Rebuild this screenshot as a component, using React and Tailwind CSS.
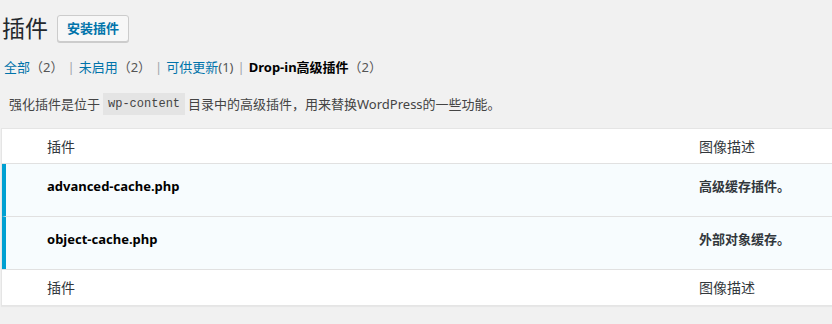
import React from "react";

const sans = { fontFamily: '"Segoe UI", "Noto Sans", "Noto Sans CJK SC", sans-serif' };

const tabs = [
  { label: "全部", count: "（2）", current: false },
  { label: "未启用", count: "（2）", current: false },
  { label: "可供更新", count: "(1)", current: false },
  { label: "Drop-in高级插件", count: "（2）", current: true },
];

const dropins = [
  { file: "advanced-cache.php", desc: "高级缓存插件。" },
  { file: "object-cache.php", desc: "外部对象缓存。" },
];

const HeadRow = ({ border, height }) => (
  <div
    className={`flex items-center text-[14px] text-[#32373c] ${height} ${border}`}
  >
    <div className="w-[688px] pl-[45px]">插件</div>
    <div className="pl-[9px]">图像描述</div>
  </div>
);

export default function App() {
  return (
    <div
      className="w-[832px] h-[324px] overflow-hidden bg-[#f1f1f1] text-[#444] text-[13px]"
      style={sans}
    >
      {/* page title */}
      <div className="flex items-center pt-[15px] pl-[2px]">
        <h1 className="text-[23px] leading-[27px] text-[#23282d] font-normal">插件</h1>
        <button className="ml-[9px] h-[27px] px-[9px] border border-[#ccc] rounded-[3px] bg-[#f7f7f7] text-[#0073aa] text-[13px] font-bold shadow-[0_1px_0_#ccc]">
          安装插件
        </button>
      </div>

      {/* filter links */}
      <ul className="flex items-center mt-[15px] pl-[4px] text-[13px] leading-[20px]">
        {tabs.map((t, i) => (
          <li key={t.label} className="flex items-center">
            {t.current ? (
              <span className="text-black font-bold">{t.label}</span>
            ) : (
              <span className="text-[#0073aa]">{t.label}</span>
            )}
            <span className="text-[#555]">{t.count}</span>
            {i < tabs.length - 1 && <span className="mx-[4px] text-[#a0a5aa]">|</span>}
          </li>
        ))}
      </ul>

      {/* description */}
      <p className="flex items-center mt-[16px] pl-[9px] leading-[20px]">
        强化插件是位于
        <code
          className="mx-[3px] px-[5px] py-[1px] bg-[#e4e4e4] text-[#444] text-[12px]"
          style={{ fontFamily: '"Liberation Mono", "DejaVu Sans Mono", monospace' }}
        >
          wp-content
        </code>
        目录中的高级插件，用来替换WordPress的一些功能。
      </p>

      {/* table */}
      <div className="mt-[13px] ml-[1px] w-[840px] bg-white border border-[#e5e5e5] shadow-[0_1px_1px_rgba(0,0,0,0.04)]">
        <HeadRow height="h-[35px]" border="border-b border-[#e1e1e1]" />
        {dropins.map((d, i) => (
          <div
            key={d.file}
            className={`flex bg-[#f7fcfe] border-l-4 border-[#00a0d2] ${
              i === 0 ? "h-[53px] border-b border-b-[#e1e1e1]" : "h-[52px]"
            }`}
          >
            <div className="w-[684px] pl-[41px] pt-[13px] font-bold text-[13px] leading-[18px] text-black">
              {d.file}
            </div>
            <div className="pl-[9px] pt-[13px] font-bold text-[13px] leading-[18px] text-[#32373c]">
              {d.desc}
            </div>
          </div>
        ))}
        <HeadRow height="h-[36px]" border="border-t border-[#e1e1e1]" />
      </div>
    </div>
  );
}
